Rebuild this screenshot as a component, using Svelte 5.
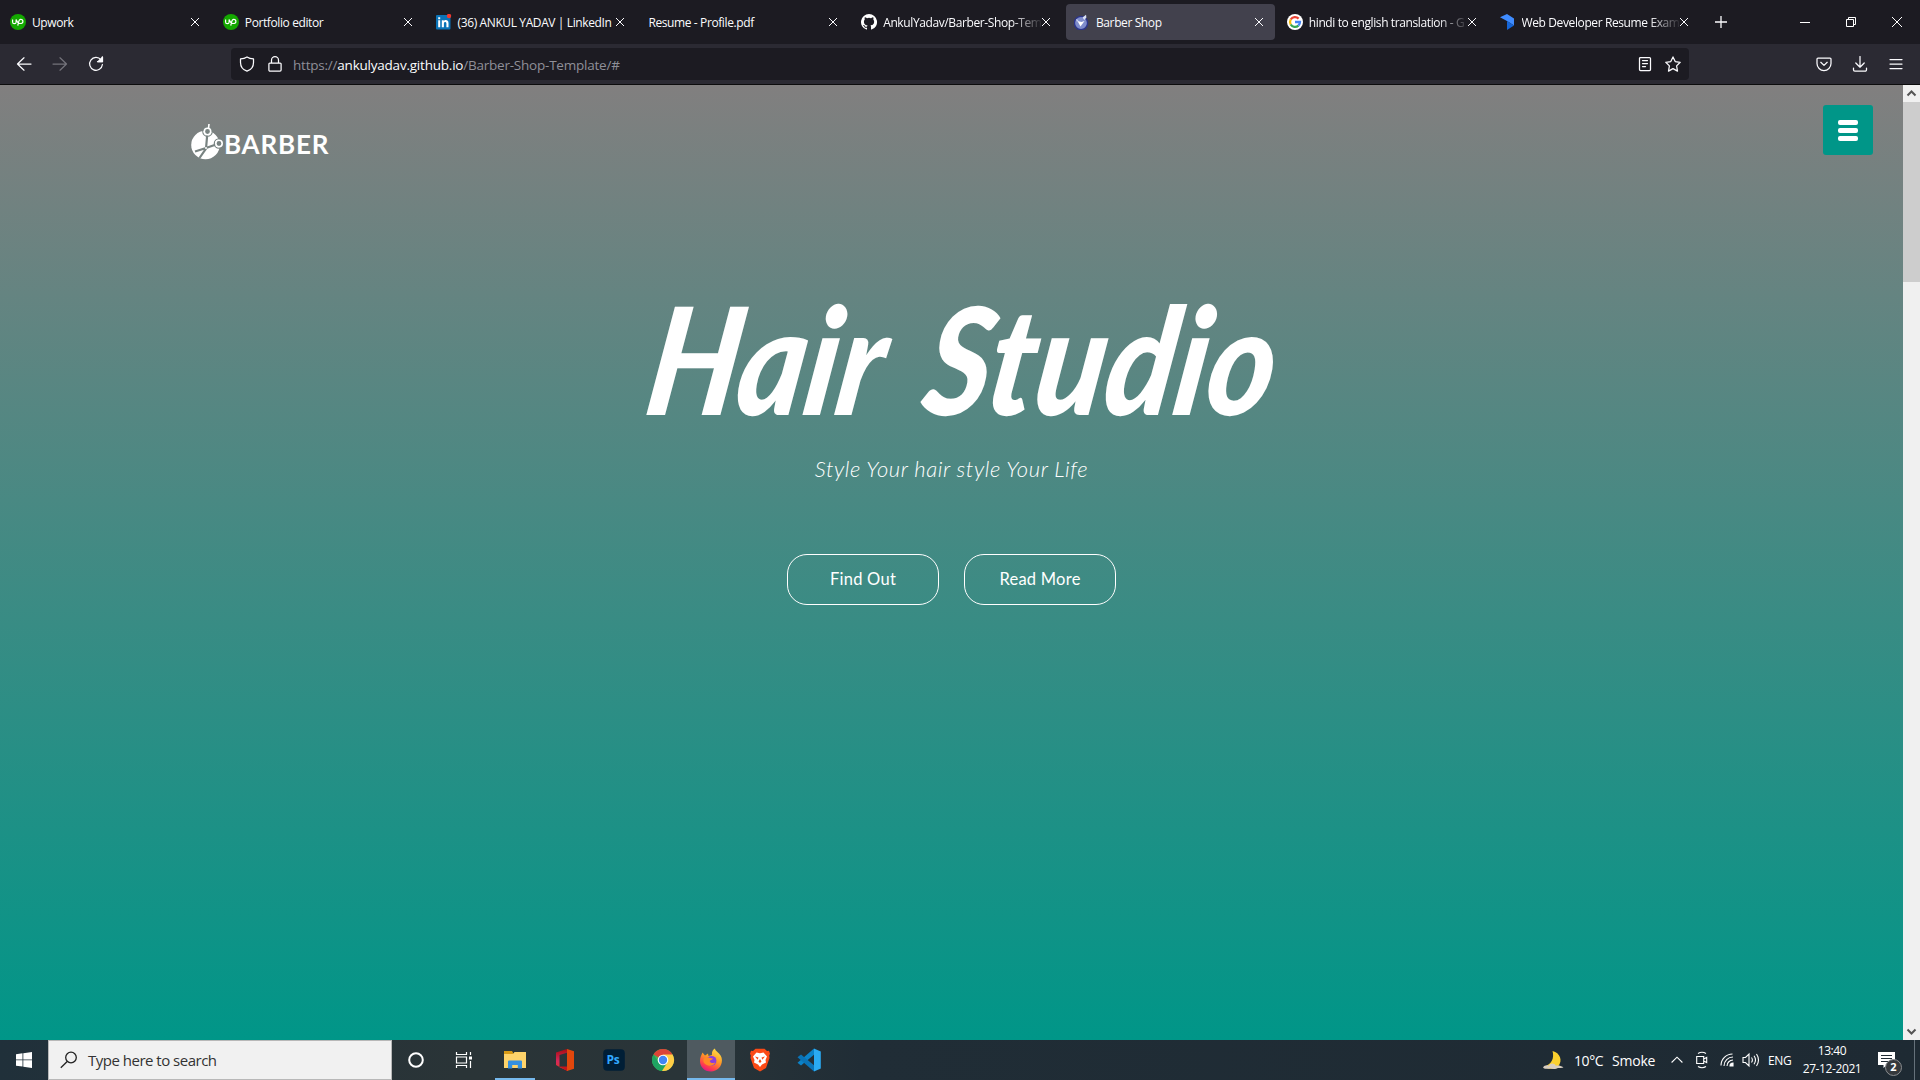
<script>
  const tabs = [
    { icon: 'up', label: 'Upwork' },
    { icon: 'up', label: 'Portfolio editor' },
    { icon: 'in', label: '(36) ANKUL YADAV | LinkedIn' },
    { icon: '', label: 'Resume - Profile.pdf' },
    { icon: 'git', label: 'AnkulYadav/Barber-Shop-Tem', fade: true },
    { icon: 'barber', label: 'Barber Shop', active: true },
    { icon: 'google', label: 'hindi to english translation - G', fade: true },
    { icon: 'resume', label: 'Web Developer Resume Exam', fade: true }
  ];
</script>

<div class="screen">
  <header class="tabs">
    {#each tabs as tab}
      <div class="tab" class:active={tab.active}>
        {#if tab.icon}
          <svg class="fav" viewBox="0 0 16 16">
            {#if tab.icon === 'up'}
              <circle cx="8" cy="8" r="8" fill="#14a800" />
              <path d="M2.600 5.500v2.400c0 2.400 3.500 2.400 3.500 0V5.500c.9 2.300 2 4 3.900 4 1.900 0 2.900-.9 2.900-2.100s-.9-2-2.200-2c-2.100 0-2.200 2.600-2.900 6.300" fill="none" stroke="#fff" stroke-width="1.200" />
            {:else if tab.icon === 'in'}
              <rect x="0" y="1" width="14.500" height="14.500" rx="1" fill="#0a73b7" />
              <path d="M2.200 6.200h2v7h-2zM2.200 3.200h2v2h-2zM5.800 6.200h2v1c1-1.700 4.700-1.600 4.700 1.800v4.200h-2.100V9.500c0-2-2.500-2-2.500 0v3.700H5.800z" fill="#fff" />
              <circle cx="13" cy="2" r="2.200" fill="#f0392f" />
            {:else if tab.icon === 'git'}
              <path d="M8 0a8 8 0 0 0-2.530 15.590c.4.070.550-.170.550-.380v-1.490c-2.010.370-2.530-.490-2.690-.940-.090-.230-.480-.940-.820-1.130-.280-.150-.680-.520-.010-.530.630-.010 1.080.580 1.230.820.720 1.210 1.870.870 2.330.660.070-.520.280-.870.510-1.070-1.780-.200-3.640-.890-3.640-3.950 0-.870.310-1.590.820-2.150-.080-.200-.360-1.020.080-2.120 0 0 .670-.210 2.200.820a7.400 7.400 0 0 1 4 0c1.530-1.040 2.200-.820 2.200-.820.440 1.100.160 1.920.080 2.120.510.560.820 1.270.820 2.150 0 3.070-1.870 3.750-3.650 3.950.290.250.540.730.540 1.480v2.200c0 .210.150.460.550.380A8 8 0 0 0 8 0z" fill="#fff" />
            {:else if tab.icon === 'barber'}
              <circle cx="7" cy="9" r="6.600" fill="#7f8dcb" stroke="#2b3489" stroke-width="1.400" />
              <path d="M8.500 3.500L12 .8l.4 2.700-2 2.500z" fill="#dbe2f7" />
              <path d="M3.500 7l3 5.500L10.500 7 7.500 8z" fill="#fff" />
              <path d="M2 5l2.500 1L3 8z" fill="#c9d3f4" />
            {:else if tab.icon === 'google'}
              <circle cx="8" cy="8" r="8" fill="#fff" />
              <g fill="none" stroke-width="2.300">
                <path d="M11.600 4.600A5 5 0 0 0 3.700 5.500" stroke="#ea4335" />
                <path d="M3.700 5.500a5 5 0 0 0 0 5" stroke="#fbbc05" />
                <path d="M3.700 10.500a5 5 0 0 0 7.700 1.100" stroke="#34a853" />
                <path d="M11.400 11.600A5 5 0 0 0 13 8H8" stroke="#4285f4" />
              </g>
            {:else}
              <path d="M0 3.200L7 0l7 4.500v7L7 7z" fill="#3f8cff" />
              <path d="M7 7l7 4.500L7 16z" fill="#1565d8" />
            {/if}
          </svg>
        {/if}
        <span class="label" class:fade={tab.fade}>{tab.label}</span>
        <svg class="close" viewBox="0 0 10 10"><path d="M1 1l8 8M9 1L1 9" /></svg>
      </div>
    {/each}
    <svg class="plus" viewBox="0 0 12 12"><path d="M6 0v12M0 6h12" /></svg>
    <div class="winctl">
      <svg viewBox="0 0 10 10"><path d="M0 5.500h10" /></svg>
      <svg viewBox="0 0 10 10"><path d="M.5 2.500h7v7h-7zM2.500 2.500v-2h7v7h-2" /></svg>
      <svg viewBox="0 0 10 10"><path d="M0 0l10 10M10 0L0 10" /></svg>
    </div>
  </header>

  <nav class="bar">
    <div class="navbtns">
      <svg viewBox="0 0 16 16"><path d="M15 8H1.500M8 1.800L1.500 8 8 14.200" /></svg>
      <svg class="dim" viewBox="0 0 16 16"><path d="M1 8h13.500M8 1.800L14.500 8 8 14.200" /></svg>
      <svg viewBox="0 0 16 16"><path d="M13 3.800A6.400 6.400 0 1 0 14.400 8.500M9.500 5.500h4.800V.9" /><path class="fill" d="M10 5.700h4.500V1.200z" /></svg>
    </div>
    <div class="url">
      <svg class="shield" viewBox="0 0 16 16"><path d="M8 .9c2 1.300 4 1.800 6.500 2v3.600C14.500 11 11.500 14 8 15.200 4.500 14 1.500 11 1.500 6.500V2.900C4 2.700 6 2.200 8 .9z" /></svg>
      <svg class="lock" viewBox="0 0 14 16"><path d="M1.800 7.200h10.400a.9.9 0 0 1 .9.900v6a1.100 1.100 0 0 1-1.100 1.100H2A1.100 1.100 0 0 1 .9 14.100v-6a.9.9 0 0 1 .9-.9zM3.500 7V4.200a3.500 3.500 0 0 1 7 0V7" /></svg>
      <span class="addr">https://<b>ankulyadav.github.io</b>/Barber-Shop-Template/#</span>
      <svg class="reader" viewBox="0 0 14 16"><path d="M2.500 1.500h9a1 1 0 0 1 1 1v11a1 1 0 0 1-1 1h-9a1 1 0 0 1-1-1v-11a1 1 0 0 1 1-1zM4.500 4.500h5M4.500 7.500h5M4.500 10.500h3" /></svg>
      <svg class="star" viewBox="0 0 16 16"><path d="M8 .9l2.200 4.700 5 .7-3.600 3.600.9 5.200L8 12.600l-4.500 2.500.9-5.200L.8 6.300l5-.7z" /></svg>
    </div>
    <div class="tools">
      <svg viewBox="0 0 16 16"><path d="M2 2h12a1 1 0 0 1 1 1v4.500a7 7 0 0 1-14 0V3a1 1 0 0 1 1-1zM4.800 6.300L8 9.400l3.200-3.100" /></svg>
      <svg viewBox="0 0 16 16"><path d="M8 .5v10.500M3.800 7L8 11.200 12.200 7M1.500 12v1.800a1.300 1.300 0 0 0 1.300 1.300h10.400a1.300 1.300 0 0 0 1.300-1.300V12" /></svg>
      <svg viewBox="0 0 16 16"><path d="M2 3.500h12M2 8h12M2 12.500h12" /></svg>
    </div>
  </nav>

  <div class="viewport">
    <main>
      <div class="top">
        <div class="logo">
          <svg viewBox="0 0 33 36">
            <circle cx="14.500" cy="21" r="14.300" fill="#fff" />
            <g fill="none" stroke="#788381">
              <path d="M16.200 11L15 24.500 8.500 34M25 20.500L15 24 4 27.500" stroke-width="2.200" />
              <circle cx="16.500" cy="7.500" r="4.700" stroke-width="1.200" />
              <circle cx="28" cy="19.500" r="4.700" stroke-width="1.200" />
            </g>
            <g stroke="#fff" stroke-width="1.600">
              <circle cx="16.500" cy="7.500" r="3.200" fill="#788381" /><path d="M17.500 4.500L18 0" />
              <circle cx="28" cy="19.500" r="3.200" fill="#788381" />
            </g>
            <circle cx="15" cy="24" r="1" fill="#fff" />
          </svg>
          <span>BARBER</span>
        </div>
        <button class="menu" aria-label="Menu"><i></i><i></i><i></i></button>
      </div>
      <svg class="title" viewBox="0 0 680 150" role="heading" aria-level="1">
        <text transform="translate(22 135) skewX(-9)" textLength="236" lengthAdjust="spacingAndGlyphs">Hair</text>
        <text transform="translate(299 135) skewX(-9)" textLength="350" lengthAdjust="spacingAndGlyphs">Studio</text>
      </svg>
      <p>Style Your hair style Your Life</p>
      <div class="actions">
        <button>Find Out</button>
        <button>Read More</button>
      </div>
    </main>
    <aside>
      <svg viewBox="0 0 17 17"><path d="M4.500 10.500l4-4 4 4" /></svg>
      <div class="thumb"></div>
      <svg viewBox="0 0 17 17"><path d="M4.500 6.500l4 4 4-4" /></svg>
    </aside>
  </div>

  <footer>
    <div class="start"><svg viewBox="0 0 16 16"><path d="M0 2.200l6.500-.9v6.200H0zM7.300 1.200L16 0v7.500H7.300zM0 8.300h6.500v6.300L0 13.700zM7.300 8.300H16V16l-8.700-1.300z" /></svg></div>
    <div class="search">
      <svg viewBox="0 0 18 18"><circle cx="11" cy="6.500" r="5.300" /><path d="M7.200 10.500L.8 16.800" /></svg>
      <span>Type here to search</span>
    </div>
    <div class="app cortana"><svg viewBox="0 0 24 24"><circle cx="12" cy="12" r="6.800" fill="none" stroke="#fff" stroke-width="2" /></svg></div>
    <div class="app"><svg viewBox="0 0 24 24"><path d="M4.500 4v2.500h10V4M4.500 20v-2.500h10V20M4.500 9h10v6h-10zM18.500 4v3M18.500 13v7" fill="none" stroke="#fff" stroke-width="1.200" /><path d="M17 8.500h3v3h-3z" fill="#fff" /></svg></div>
    <div class="app open wide"><svg viewBox="0 0 24 24">
      <path d="M1 3h8l1.500 2.500V8H1z" fill="#d99b16" /><path d="M1 6h9l1.500-2H23v16H1z" fill="#fed36a" />
      <path d="M5 20.500v-7a1 1 0 0 1 1-1h12a1 1 0 0 1 1 1v7h-4.200V17H9.200v3.500z" fill="#3590df" />
    </svg></div>
    <div class="app"><svg viewBox="0 0 24 24">
      <defs><linearGradient id="office" x2="0" y2="1"><stop stop-color="#a80c12" /><stop offset=".55" stop-color="#d6295c" /><stop offset="1" stop-color="#e5351a" /></linearGradient></defs>
      <path d="M14 1L3 4.500V17l3.500 2V7L14 4.800zM6 19l9 4V19z" fill="url(#office)" /><path d="M14 1l7 2.200v17.600L14 23z" fill="#e2470c" /><path d="M6.500 18.500H14V23z" fill="#c4151b" />
    </svg></div>
    <div class="app"><svg viewBox="0 0 24 24"><rect x="1.200" y="1.200" width="21.600" height="21.600" rx="4" fill="#001e36" /><text x="4.500" y="16" class="ps">Ps</text></svg></div>
    <div class="app"><svg viewBox="0 0 24 24">
      <circle cx="12" cy="12" r="11" fill="#4caf50" />
      <path d="M12 12L2.470 6.500A11 11 0 0 1 21.530 6.500z" fill="#db4437" /><path d="M2.470 6.500A11 11 0 0 0 11 23l4-7-6.500-.5z" fill="#1ea362" />
      <path d="M12 6.500h9.530A11 11 0 0 1 11 23l5.500-8.500z" fill="#ffcd46" /><circle cx="12" cy="12" r="5.300" fill="#fff" /><circle cx="12" cy="12" r="4.200" fill="#4285f4" />
    </svg></div>
    <div class="app open current"><svg viewBox="0 0 24 24">
      <defs><linearGradient id="fox" x1=".8" y1="0" x2=".3" y2="1"><stop stop-color="#ffe64a" /><stop offset=".45" stop-color="#ff9a26" /><stop offset=".8" stop-color="#ff3f4c" /><stop offset="1" stop-color="#e31587" /></linearGradient></defs>
      <path d="M3.500 4.500l2.500 3 3-2 .5 2.500 3.500-1c-.5-3 1-5.500 3-6.500 0 3 5 4 6.500 9C24.500 17 19 23.500 12 23.500S1 18.500 1 13c0-3.500 1-5 2.500-8.500z" fill="url(#fox)" />
      <circle cx="12.500" cy="12.800" r="4.900" fill="#8a3de0" /><path d="M4.500 11c2-2.500 5-2 6.500-1l3 .5c-1 1.800-2.800 1.500-3.300 2.500.5 2.500 4 2.500 5.500 1.200-1 4.300-8.700 5-11.700-.2z" fill="#ff8a27" />
    </svg></div>
    <div class="app"><svg viewBox="0 0 24 24">
      <path d="M7.500.8h9L19 3l2-.3 1 3-.8 1.800.3 2.500-3.500 10L12 23.500 6 20 2.500 10l.3-2.500L2 5.700l1-3L5 3z" fill="#fb4a16" />
      <path d="M8.500 4.500L12 5.300l3.500-.8 3.500 4-1.500 3.500.5 2.500-4 2L12 19l-2-2.500-4-2 .5-2.500L5 8.500z" fill="#fff" /><path d="M7 8.500l3.500 1-.8 2.300zM17 8.500l-3.500 1 .8 2.300zM10.500 13.500L12 11l1.500 2.500L12 15z" fill="#fb4a16" />
    </svg></div>
    <div class="app"><svg viewBox="0 0 24 24">
      <path d="M17 .5v6.300L4 17.500l-3.500-2.800z" fill="#0b83c9" /><path d="M4 6.500l13 10.700v6.300L.5 9.300z" fill="#0a74b8" /><path d="M17 .5l6.800 3v17l-6.800 3z" fill="#2aaaf2" />
    </svg></div>

    <div class="tray">
      <svg class="moon" viewBox="0 0 24 20"><path d="M11 0c8 2 11 10 6 16-3 3.500-11 3.500-15 .5C10 14 13 8 11 0z" fill="#fbd02e" /><path d="M1 17.500c1-2 4-3 6-2 1.500-3 6-3 7.500 0 3-.5 5 0 8 1.500-1 1-4 1-6 1-2 1.500-6 1-8 .5-3 .5-6 .3-7.500-1z" fill="#d8cdc0" /></svg>
      <span class="temp">10°C</span><span class="smoke">Smoke</span>
      <svg class="chev" viewBox="0 0 12 8"><path d="M.6 6.500L6 1.200l5.400 5.300" /></svg>
      <svg class="meet" viewBox="0 0 14 18"><path d="M1.700 5.500h7v7h-7zM8.700 8l3-1.500v5L8.700 10M3 2.500q4-2.500 8 0M3 15.500q4 2.500 8 0" /></svg>
      <svg class="wifi" viewBox="0 0 14 14"><path d="M1 12.500A11.500 11.500 0 0 1 12.500 1M4 13A9 9 0 0 1 13 4M7 13a6 6 0 0 1 6-6" /><path d="M10 13a3 3 0 0 1 3-3v3z" class="fill" /></svg>
      <svg class="vol" viewBox="0 0 18 16"><path d="M1 5.500h2.500L7 2v12l-3.500-3.500H1zM9.500 5.500q1.800 2.500 0 5M12 3.800q3 4.200 0 8.400M14.500 2q4 6 0 12" /></svg>
      <span class="eng">ENG</span>
      <div class="clock"><span>13:40</span><span>27-12-2021</span></div>
      <div class="note">
        <svg viewBox="0 0 17 16"><path d="M0 0h17v13H9l-3.500 3v-3H0z" fill="#fff" /><path d="M3 3.500h11M3 6.500h11M3 9.500h8" stroke="#1f2b34" /></svg>
        <b>2</b>
      </div>
    </div>
  </footer>
</div>

<style>
  :global(body) { margin: 0; overflow: hidden; }
  .screen { width: 1920px; height: 1080px; display: flex; flex-direction: column; font-family: "Open Sans", "Noto Sans", sans-serif; color: #fbfbfe; }
  .screen * { box-sizing: border-box; }
  svg { display: block; flex: none; fill: none; }
  button { font: inherit; color: inherit; }

  .tabs { height: 44px; background: #1c1b22; display: flex; align-items: center; padding-left: 2px; }
  .tab { width: 208.800px; height: 36px; margin-right: 4px; border-radius: 4px; padding: 0 11px 0 8px; display: flex; align-items: center; flex: none; }
  .tab.active { background: #42414d; }
  .fav { width: 16px; height: 16px; margin-right: 6px; }
  .label { flex: 1; min-width: 0; white-space: nowrap; font-size: 12px; letter-spacing: -0.390px; }
  .fade { mask-image: linear-gradient(to right, #000 calc(100% - 30px), rgba(0, 0, 0, 0.08)); }
  .close { width: 10px; height: 10px; stroke: #fbfbfe; stroke-width: 1; }
  .plus { width: 12px; height: 12px; stroke: #fbfbfe; stroke-width: 1.300; margin-left: 11px; }
  .winctl { margin-left: auto; display: flex; gap: 36px; padding-right: 18px; }
  .winctl svg { width: 10px; height: 10px; stroke: #fff; stroke-width: 1; }

  .bar { height: 41px; background: #2b2a33; border-bottom: 1px solid #0c0c0d; display: flex; align-items: center; }
  .bar svg { stroke: #fbfbfe; stroke-width: 1.250; stroke-linecap: round; stroke-linejoin: round; width: 16px; height: 16px; }
  .navbtns { width: 231px; display: flex; gap: 20px; padding-left: 16px; }
  .bar .dim { stroke: #74737b; }
  .fill { fill: #fbfbfe; }
  .url { width: 1458px; height: 32px; background: #1c1b22; border-radius: 4px; display: flex; align-items: center; padding: 0 8px; }
  .bar .lock { width: 14px; margin: 0 11px 0 13px; }
  .addr { flex: 1; font-size: 13.500px; color: #8f8f98; letter-spacing: -0.220px; padding-top: 1px; }
  .addr b { color: #fbfbfe; font-weight: 400; }
  .bar .reader { width: 14px; margin-right: 13px; }
  .tools { margin-left: auto; display: flex; gap: 20px; padding-right: 16px; }

  .viewport { height: 955px; display: flex; }
  main { width: 1903px; background: linear-gradient(#817f7f, #009688); display: flex; flex-direction: column; align-items: center; font-family: Lato, sans-serif; color: #fff; }
  .top { align-self: stretch; display: flex; justify-content: space-between; padding: 20px 30px 0 191px; height: 195px; }
  .logo { display: flex; align-items: flex-start; padding-top: 19px; height: 60px; }
  .logo svg { width: 33px; height: 36px; }
  .logo span { font: 700 26px/36px Lato, sans-serif; letter-spacing: 0.800px; padding-top: 2px; }
  .menu { width: 50px; height: 50px; border: 0; border-radius: 3px; background: #009688; display: flex; flex-direction: column; align-items: center; justify-content: center; gap: 3px; }
  .menu i { width: 20px; height: 5px; border-radius: 2px; background: #fff; }
  .title { width: 680px; height: 150px; align-self: flex-start; margin-left: 620px; overflow: visible; }
  .title text { font: italic 900 149px Lato, sans-serif; fill: #fff; }
  p { margin: 23px 0 0; font: italic 300 22px/32px Lato, sans-serif; letter-spacing: 0.600px; }
  .actions { display: flex; gap: 25px; margin-top: 69px; }
  .actions button { width: 152px; height: 51px; border: 1px solid #fff; border-radius: 20px; background: none; font: 400 16.500px Lato, sans-serif; letter-spacing: 0.250px; padding: 0 0 1px; }
  aside { width: 17px; background: #f0f0f0; display: flex; flex-direction: column; }
  aside svg { width: 17px; height: 17px; stroke: #555; stroke-width: 2; }
  .thumb { height: 180px; background: #cdcdcd; margin-bottom: auto; }

  footer { height: 40px; display: flex; background: linear-gradient(90deg, #20303a, #2a3437 24%, #293438 36%, #202d36 45%, #1e2a33); }
  .start { width: 48px; display: flex; align-items: center; justify-content: center; }
  .start svg { width: 16px; height: 16px; fill: #fff; }
  .search { width: 344px; background: #f1f1f1; border: 1px solid #b8b8b8; display: flex; align-items: center; padding-left: 11px; gap: 10px; color: #333; font-size: 15px; letter-spacing: -0.500px; }
  .search svg { width: 18px; height: 18px; stroke: #222; stroke-width: 1.300; }
  .app { width: 49px; display: flex; align-items: center; justify-content: center; flex: none; }
  .cortana { width: 47px; }
  .app svg { width: 24px; height: 24px; }
  .open { border-bottom: 2px solid #76b9ed; padding-top: 2px; }
  .wide { width: 40px; margin: 0 5px 0 7px; }
  .current { width: 48px; background: #4f5a60; }
  .ps { font: 700 12px "Open Sans", sans-serif; letter-spacing: -0.300px; fill: #31a8ff; }
  .tray { margin-left: auto; display: flex; align-items: center; width: 378px; height: 40px; font-size: 14px; color: #fff; }
  .tray svg { stroke: #fff; stroke-width: 1.100; }
  .tray .moon { width: 23px; height: 19px; stroke: none; }
  .temp { width: 29px; margin-left: 9px; letter-spacing: -0.400px; white-space: nowrap; }
  .smoke { width: 43px; margin-left: 9px; letter-spacing: -0.200px; }
  .chev { width: 12px; height: 8px; margin-left: 16px; }
  .meet { width: 14px; height: 18px; margin-left: 12px; }
  .wifi { width: 14px; height: 14px; margin-left: 11px; }
  .vol { width: 18px; height: 16px; margin-left: 8px; }
  .eng { width: 24px; margin-left: 8px; font-size: 12px; letter-spacing: -0.300px; }
  .clock { width: 60px; margin-left: 10px; display: flex; flex-direction: column; align-items: center; font-size: 12px; line-height: 18px; letter-spacing: -0.400px; white-space: nowrap; }
  .note { position: relative; width: 38px; height: 40px; margin-left: 15px; padding: 12px 0 0 1px; border-right: 1px solid #65717a; }
  .tray .note svg { width: 17px; height: 16px; stroke: none; }
  .note b { position: absolute; left: 8px; top: 19px; width: 17px; height: 17px; border-radius: 50%; background: #34383c; border: 1px solid #8a8d90; font-size: 11px; line-height: 14px; text-align: center; }
</style>
